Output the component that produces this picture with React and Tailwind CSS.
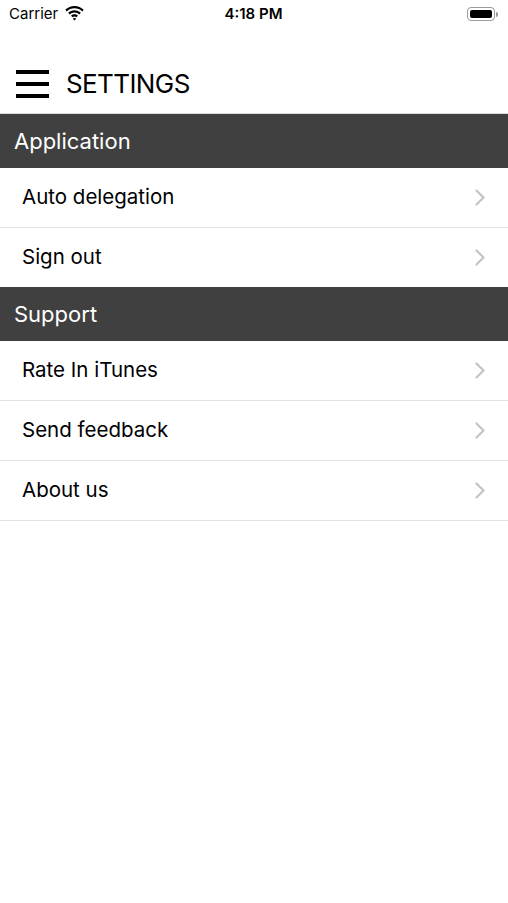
const sections = [
  { title: 'Application', items: ['Auto delegation', 'Sign out'] },
  { title: 'Support', items: ['Rate In iTunes', 'Send feedback', 'About us'] },
];

function Chevron() {
  return (
    <svg width="11" height="17" viewBox="0 0 11 17" fill="none">
      <path d="M1.5 1.5l7 7-7 7" stroke="#c4c4c7" strokeWidth="2.2" strokeLinecap="round" strokeLinejoin="round" />
    </svg>
  );
}

function StatusBar() {
  return (
    <div className="h-[28px] flex items-center justify-between pl-[9px] pr-[10px] text-[15px] text-black">
      <div className="flex items-center gap-[6px] w-[120px]">
        <span>Carrier</span>
        <svg width="21" height="15" viewBox="0 0 19 14" className="mt-[-1px]">
          <path d="M9.5 2.2c2.8 0 5.3 1.1 7.2 2.9l1.4-1.5C15.8 1.4 12.8.1 9.5.1S3.2 1.4.9 3.6l1.4 1.5c1.9-1.8 4.4-2.9 7.2-2.9z" fill="#000" />
          <path d="M9.5 6.1c1.7 0 3.3.7 4.5 1.8l1.4-1.5C13.9 4.9 11.8 4 9.5 4S5.1 4.9 3.6 6.4L5 7.9c1.2-1.1 2.8-1.8 4.5-1.8z" fill="#000" />
          <path d="M9.5 9.9c.7 0 1.3.3 1.8.7l1.4-1.5c-.9-.8-2-1.3-3.2-1.3s-2.3.5-3.2 1.3l1.4 1.5c.5-.4 1.1-.7 1.800-.7zM9.5 13.6l1.6-1.7c-.4-.4-1-.6-1.6-.6s-1.2.2-1.6.6z" fill="#000" />
        </svg>
      </div>
      <span className="font-semibold">4:18 PM</span>
      <div className="w-[120px] flex justify-end items-center">
        <div className="w-[28px] h-[14px] rounded-[4px] border border-[#9a9a9a] p-[2px]">
          <div className="w-full h-full rounded-[2px] bg-black" />
        </div>
        <div className="w-[2px] h-[5px] rounded-r bg-[#9a9a9a] ml-[1px]" />
      </div>
    </div>
  );
}

export default function App() {
  return (
    <div className="w-[508px] h-[903px] bg-white" style={{ fontFamily: 'Inter, "Liberation Sans", sans-serif' }}>
      <StatusBar />

      {/* Nav bar */}
      <div className="h-[86px] flex items-center pl-[16px] pt-[26px] border-b border-[#d9d9d9]">
        <div className="w-[33px] h-[28px] flex flex-col justify-between">
          <span className="block h-[4px] bg-black" />
          <span className="block h-[4px] bg-black" />
          <span className="block h-[4px] bg-black" />
        </div>
        <span className="ml-[17px] text-[26px] text-black tracking-[-0.6px]">SETTINGS</span>
      </div>

      {sections.map((s) => (
        <div key={s.title}>
          <div className="h-[54px] bg-[#404040] flex items-center pl-[14px] text-[22px] text-white">
            {s.title}
          </div>
          {s.items.map((item, i) => {
            const last = i === s.items.length - 1;
            return (
              <div
                key={item}
                className={`flex items-center justify-between pl-[22px] pr-[22px] text-[20.5px] text-black ${
                  last && s.title === 'Application' ? 'h-[59px]' : 'h-[60px] border-b border-[#e3e3e3]'
                }`}
              >
                <span>{item}</span>
                <Chevron />
              </div>
            );
          })}
        </div>
      ))}
    </div>
  );
}
